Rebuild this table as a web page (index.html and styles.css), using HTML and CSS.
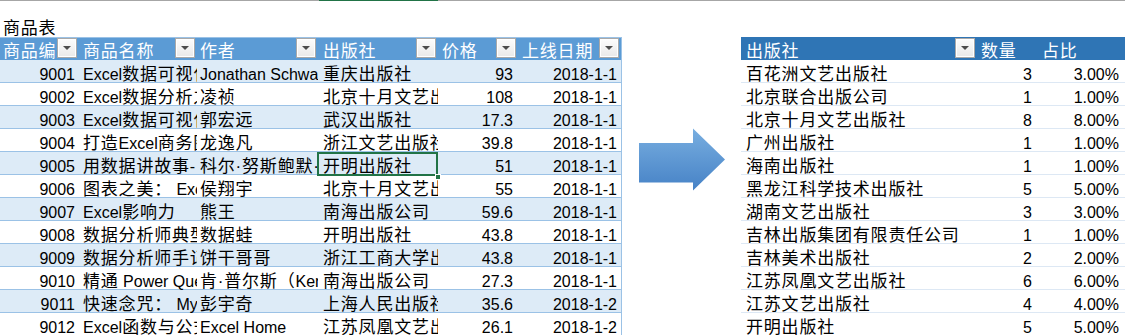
FILE: index.html
```
<!DOCTYPE html>
<html lang="zh-CN">
<head>
<meta charset="utf-8">
<title>商品表</title>
<link rel="stylesheet" href="styles.css">
</head>
<body>
<div class="topline"><div class="tl-gray tl-first"></div><div class="tl-sel"></div><div class="tl-gray tl-rest"></div></div>
<div class="sheet">
  <section class="left">
    <div class="title z">商品表</div>
    <div class="ltable">
      <div class="row hrow">
        <div class="h"><span class="ht z">商品编号</span><span class="fb"></span></div>
        <div class="h hb"><span class="ht z">商品名称</span><span class="fb"></span></div>
        <div class="h hc"><span class="ht z">作者</span><span class="fb"></span></div>
        <div class="h hd"><span class="ht z">出版社</span><span class="fb"></span></div>
        <div class="h he"><span class="ht z">价格</span><span class="fb"></span></div>
        <div class="h hf"><span class="ht z">上线日期</span><span class="fb"></span></div>
      </div>
      <div class="row odd">
        <div class="c a">9001</div><div class="c b">Excel<span class="z">数据可视化之美</span></div><div class="c c3">Jonathan Schwabish</div><div class="c d z">重庆出版社</div><div class="c e">93</div><div class="c f">2018-1-1</div>
      </div>
      <div class="row">
        <div class="c a">9002</div><div class="c b">Excel<span class="z">数据分析之道</span></div><div class="c c3 z">凌祯</div><div class="c d z">北京十月文艺出版社</div><div class="c e">108</div><div class="c f">2018-1-1</div>
      </div>
      <div class="row odd">
        <div class="c a">9003</div><div class="c b">Excel<span class="z">数据可视化</span></div><div class="c c3 z">郭宏远</div><div class="c d z">武汉出版社</div><div class="c e">17.3</div><div class="c f">2018-1-1</div>
      </div>
      <div class="row">
        <div class="c a">9004</div><div class="c b"><span class="z">打造</span>Excel<span class="z">商务图表</span></div><div class="c c3 z">龙逸凡</div><div class="c d z">浙江文艺出版社</div><div class="c e">39.8</div><div class="c f">2018-1-1</div>
      </div>
      <div class="row odd">
        <div class="c a">9005</div><div class="c b"><span class="z">用数据讲故事</span>- <span class="z">商业图表</span></div><div class="c c3 z">科尔·努斯鲍默·纳菲克</div><div class="c d z sel">开明出版社</div><div class="c e">51</div><div class="c f">2018-1-1</div>
      </div>
      <div class="row">
        <div class="c a">9006</div><div class="c b"><span class="z">图表之美：</span> Excel</div><div class="c c3 z">侯翔宇</div><div class="c d z">北京十月文艺出版社</div><div class="c e">55</div><div class="c f">2018-1-1</div>
      </div>
      <div class="row odd">
        <div class="c a">9007</div><div class="c b">Excel<span class="z">影响力</span></div><div class="c c3 z">熊王</div><div class="c d z">南海出版公司</div><div class="c e">59.6</div><div class="c f">2018-1-1</div>
      </div>
      <div class="row">
        <div class="c a">9008</div><div class="c b z">数据分析师典型案例</div><div class="c c3 z">数据蛙</div><div class="c d z">开明出版社</div><div class="c e">43.8</div><div class="c f">2018-1-1</div>
      </div>
      <div class="row odd">
        <div class="c a">9009</div><div class="c b z">数据分析师手记</div><div class="c c3 z">饼干哥哥</div><div class="c d z">浙江工商大学出版社</div><div class="c e">43.8</div><div class="c f">2018-1-1</div>
      </div>
      <div class="row">
        <div class="c a">9010</div><div class="c b"><span class="z">精通</span> Power Query</div><div class="c c3"><span class="z">肯·普尔斯（</span>Ken Puls<span class="z">）</span></div><div class="c d z">南海出版公司</div><div class="c e">27.3</div><div class="c f">2018-1-1</div>
      </div>
      <div class="row odd">
        <div class="c a">9011</div><div class="c b"><span class="z">快速念咒：</span> MySQL</div><div class="c c3 z">彭宇奇</div><div class="c d z">上海人民出版社</div><div class="c e">35.6</div><div class="c f">2018-1-2</div>
      </div>
      <div class="row">
        <div class="c a">9012</div><div class="c b">Excel<span class="z">函数与公式</span></div><div class="c c3">Excel Home</div><div class="c d z">江苏凤凰文艺出版社</div><div class="c e">26.1</div><div class="c f">2018-1-2</div>
      </div>
    </div>
  </section>

  <div class="arrow-col">
    <svg class="arrow" width="86" height="63" viewBox="0 0 86 63" aria-hidden="true">
      <defs>
        <linearGradient id="ag" x1="0" y1="0" x2="0" y2="1">
          <stop offset="0" stop-color="#78aee0"/>
          <stop offset="1" stop-color="#4682c6"/>
        </linearGradient>
      </defs>
      <path d="M0 15 H54 V0.5 L86 31.5 L54 62.5 V54.5 H0 Z" fill="url(#ag)"/>
    </svg>
  </div>

  <section class="right">
    <div class="rrow rhead">
      <div class="rh r1"><span class="ht z">出版社</span><span class="fb"></span></div>
      <div class="rh r2 z">数量</div>
      <div class="rh r3 z">占比</div>
    </div>
    <div class="rrow"><div class="rc r1 z">百花洲文艺出版社</div><div class="rc r2">3</div><div class="rc r3">3.00%</div></div>
    <div class="rrow"><div class="rc r1 z">北京联合出版公司</div><div class="rc r2">1</div><div class="rc r3">1.00%</div></div>
    <div class="rrow"><div class="rc r1 z">北京十月文艺出版社</div><div class="rc r2">8</div><div class="rc r3">8.00%</div></div>
    <div class="rrow"><div class="rc r1 z">广州出版社</div><div class="rc r2">1</div><div class="rc r3">1.00%</div></div>
    <div class="rrow"><div class="rc r1 z">海南出版社</div><div class="rc r2">1</div><div class="rc r3">1.00%</div></div>
    <div class="rrow"><div class="rc r1 z">黑龙江科学技术出版社</div><div class="rc r2">5</div><div class="rc r3">5.00%</div></div>
    <div class="rrow"><div class="rc r1 z">湖南文艺出版社</div><div class="rc r2">3</div><div class="rc r3">3.00%</div></div>
    <div class="rrow"><div class="rc r1 z">吉林出版集团有限责任公司</div><div class="rc r2">1</div><div class="rc r3">1.00%</div></div>
    <div class="rrow"><div class="rc r1 z">吉林美术出版社</div><div class="rc r2">2</div><div class="rc r3">2.00%</div></div>
    <div class="rrow"><div class="rc r1 z">江苏凤凰文艺出版社</div><div class="rc r2">6</div><div class="rc r3">6.00%</div></div>
    <div class="rrow"><div class="rc r1 z">江苏文艺出版社</div><div class="rc r2">4</div><div class="rc r3">4.00%</div></div>
    <div class="rrow"><div class="rc r1 z">开明出版社</div><div class="rc r2">5</div><div class="rc r3">5.00%</div></div>
  </section>
</div>
</body>
</html>
```
FILE: styles.css
```
html, body {
  margin: 0;
  padding: 0;
}
body {
  width: 1125px;
  height: 335px;
  overflow: hidden;
  background: #ffffff;
  color: #000000;
  font-family: "Liberation Sans", "Noto Sans CJK SC", sans-serif;
  font-size: 16px;
}

.z {
  font-size: 17px;
  letter-spacing: 0.8px;
}

/* top header strip of the sheet */
.topline {
  display: flex;
  height: 1px;
}
.tl-gray { background: #a6a6a6; }
.tl-first { width: 319px; }
.tl-sel { width: 119px; background: #217346; }
.tl-rest { flex: 1; }

.sheet {
  display: flex;
  padding-top: 13px;
}

/* ---------- left table ---------- */
.left {
  flex: none;
  width: 622px;
}
.title {
  height: 23px;
  box-sizing: border-box;
  padding: 5px 0 0 3px;
  line-height: 19px;
  white-space: nowrap;
}
.ltable {
  border-right: 1px solid #9bc2e6;
}
.row {
  display: grid;
  grid-template-columns: 79px 118px 121px 120px 80px 103px;
  height: 23px;
  box-sizing: border-box;
  border-bottom: 1px solid #9bc2e6;
}
.row.odd { background: #ddebf7; }

.hrow {
  background: #5b9bd5;
  border-top: 1px solid #9bc2e6;
  border-bottom: none;
  color: #ffffff;
}
.h {
  display: flex;
  align-items: flex-start;
  min-width: 0;
}
.ht {
  flex: 1;
  min-width: 0;
  overflow: hidden;
  white-space: nowrap;
  padding: 4px 0 0 3px;
  line-height: 19px;
}
.hb .ht { padding-left: 4px; }
.hc .ht { padding-left: 3px; }
.hd .ht { padding-left: 5px; }
.he .ht { padding-left: 4px; }
.hf .ht { padding-left: 4px; }

.fb {
  flex: none;
  position: relative;
  width: 20px;
  height: 20px;
  box-sizing: border-box;
  margin-right: 2px;
  border: 1px solid #a9a9a9;
  background: linear-gradient(#fdfdfd, #e9e9e9);
  box-shadow: inset 0 0 0 1px #ffffff;
}
.fb::after {
  content: "";
  position: absolute;
  left: 5px;
  top: 7px;
  border-left: 4px solid transparent;
  border-right: 4px solid transparent;
  border-top: 4px solid #4d4d4d;
}

.c {
  min-width: 0;
  padding: 5px 4px 0 4px;
  line-height: 19px;
  white-space: nowrap;
  overflow-x: clip;
  overflow-y: visible;
}
.a { text-align: right; padding-right: 4px; }
.b { padding-left: 4px; }
.c3 { padding-left: 3px; }
.d { padding-left: 5px; }
.e { text-align: right; padding-right: 5px; }
.f { text-align: right; padding-right: 4px; }

.sel {
  position: relative;
  overflow: visible;
}
.sel::after {
  content: "";
  position: absolute;
  left: -1px;
  top: 0;
  width: 121px;
  height: 24px;
  box-sizing: border-box;
  border: 2px solid #217346;
}
.sel::before {
  content: "";
  position: absolute;
  right: -3px;
  bottom: -4px;
  width: 6px;
  height: 6px;
  box-sizing: border-box;
  background: #217346;
  border: 1px solid #ffffff;
  z-index: 2;
}

/* ---------- arrow ---------- */
.arrow-col {
  flex: none;
  width: 119px;
  box-sizing: border-box;
  padding: 114px 0 0 17px;
}
.arrow { display: block; }

/* ---------- right table ---------- */
.right {
  flex: none;
  width: 384px;
  margin-top: 23px;
}
.rrow {
  display: grid;
  grid-template-columns: 236px 60px 88px;
  height: 23px;
  box-sizing: border-box;
  border-bottom: 1px solid #dde8f4;
}
.rhead {
  background: #2f75b5;
  color: #ffffff;
  border-bottom: none;
  padding-top: 1px;
}
.rh {
  min-width: 0;
  white-space: nowrap;
  line-height: 19px;
}
.rh.r1 {
  display: flex;
  align-items: flex-start;
}
.rh.r1 .ht { padding-left: 5px; }
.rh.r2 { padding: 4px 0 0 4px; }
.rh.r3 { padding: 4px 0 0 5px; }

.rc {
  min-width: 0;
  padding-top: 5px;
  line-height: 19px;
  white-space: nowrap;
  overflow-x: clip;
}
.rc.r1 { padding-left: 5px; }
.rc.r2 { text-align: right; padding-right: 5px; }
.rc.r3 { text-align: right; padding-right: 6px; }
```
